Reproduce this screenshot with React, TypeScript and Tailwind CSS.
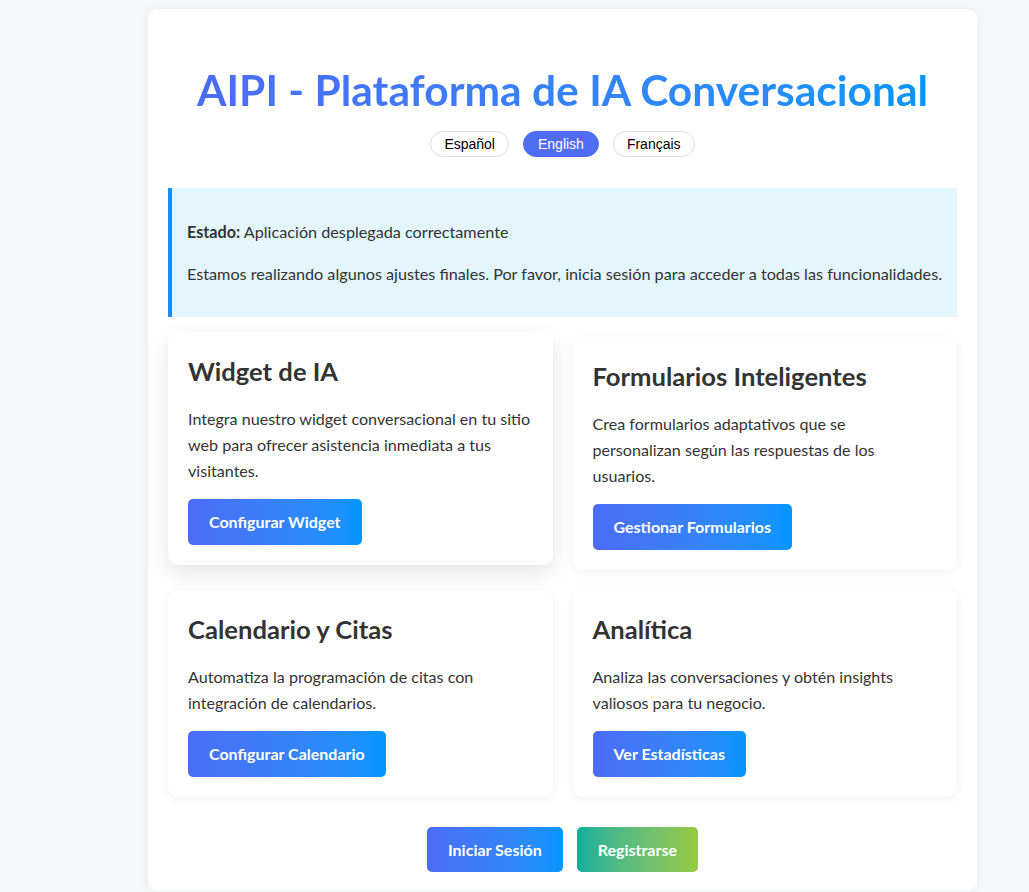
import React from "react";

type Card = {
  title: string;
  lines: string[];
  button: string;
  hovered?: boolean;
};

const cards: Card[] = [
  {
    title: "Widget de IA",
    lines: [
      "Integra nuestro widget conversacional en tu sitio",
      "web para ofrecer asistencia inmediata a tus",
      "visitantes.",
    ],
    button: "Configurar Widget",
    hovered: true,
  },
  {
    title: "Formularios Inteligentes",
    lines: [
      "Crea formularios adaptativos que se",
      "personalizan según las respuestas de los",
      "usuarios.",
    ],
    button: "Gestionar Formularios",
  },
  {
    title: "Calendario y Citas",
    lines: ["Automatiza la programación de citas con", "integración de calendarios."],
    button: "Configurar Calendario",
  },
  {
    title: "Analítica",
    lines: ["Analiza las conversaciones y obtén insights", "valiosos para tu negocio."],
    button: "Ver Estadísticas",
  },
];

function FeatureCard({ card }: { card: Card }) {
  return (
    <div
      className={
        card.hovered
          ? "bg-white rounded-[10px] p-5 -translate-y-[5px] shadow-[0_8px_22px_rgba(0,0,0,0.11)] flex flex-col items-start"
          : "bg-white rounded-[10px] p-5 shadow-[0_2px_10px_rgba(0,0,0,0.06)] flex flex-col items-start"
      }
    >
      <h3 className="text-[25.6px] leading-[38px] font-bold text-[#333333] whitespace-nowrap">{card.title}</h3>
      <p className="mt-4 mb-[15px] text-[16.1px] leading-[26px] text-[#333333]">
        {card.lines.map((l, i) => (
          <span key={i} className="block whitespace-nowrap">
            {l}
          </span>
        ))}
      </p>
      <button className="h-[46px] px-[21px] rounded-[5px] bg-gradient-to-r from-[#4a6cf7] to-[#0096ff] text-white text-[16px] font-bold whitespace-nowrap">
        {card.button}
      </button>
    </div>
  );
}

export default function App() {
  return (
    <div className="min-h-screen bg-[#f5f7fa] pt-[9px] pb-4" style={{ fontFamily: "Lato, sans-serif" }}>
      <div className="ml-[148px] w-[829px] bg-white rounded-[10px] shadow-[0_0_12px_rgba(0,0,0,0.05)] px-5 pt-5 pb-[19px]">
        <h1 className="mt-[37px] text-center text-[42.5px] leading-[48px] font-bold">
          <span className="bg-gradient-to-r from-[#4a6cf7] to-[#0096ff] bg-clip-text text-transparent">
            AIPI - Plataforma de IA Conversacional
          </span>
        </h1>

        <div
          className="mt-[17px] flex justify-center gap-[14px] text-[14px]"
          style={{ fontFamily: '"Liberation Sans", Arial, sans-serif' }}
        >
          <button className="h-[26px] px-[13px] rounded-full border border-[#dddddd] bg-white text-black">
            Español
          </button>
          <button className="h-[26px] px-[14px] rounded-full border border-[#4f6cf5] bg-[#4f6cf5] text-white">
            English
          </button>
          <button className="h-[26px] px-[13px] rounded-full border border-[#dddddd] bg-white text-black">
            Français
          </button>
        </div>

        <div className="mt-[31px] bg-[#e3f5fd] border-l-4 border-[#1e8cf5] px-[15px] py-[15px] text-[16.2px] leading-[25.6px] text-[#333333]">
          <p className="my-4">
            <strong className="font-bold">Estado:</strong> Aplicación desplegada correctamente
          </p>
          <p className="my-4">
            Estamos realizando algunos ajustes finales. Por favor, inicia sesión para acceder a todas las funcionalidades.
          </p>
        </div>

        <div className="mt-5 grid grid-cols-2 gap-5">
          {cards.map((c) => (
            <FeatureCard key={c.title} card={c} />
          ))}
        </div>

        <div className="mt-[30px] flex justify-center gap-[14px]">
          <button className="h-[45px] px-[21px] rounded-[5px] bg-gradient-to-r from-[#4a6cf7] to-[#0096ff] text-white text-[16px] font-bold">
            Iniciar Sesión
          </button>
          <button className="h-[45px] px-[21px] rounded-[5px] bg-gradient-to-r from-[#00b09b] to-[#96c93d] text-white text-[16px] font-bold">
            Registrarse
          </button>
        </div>
      </div>
    </div>
  );
}
